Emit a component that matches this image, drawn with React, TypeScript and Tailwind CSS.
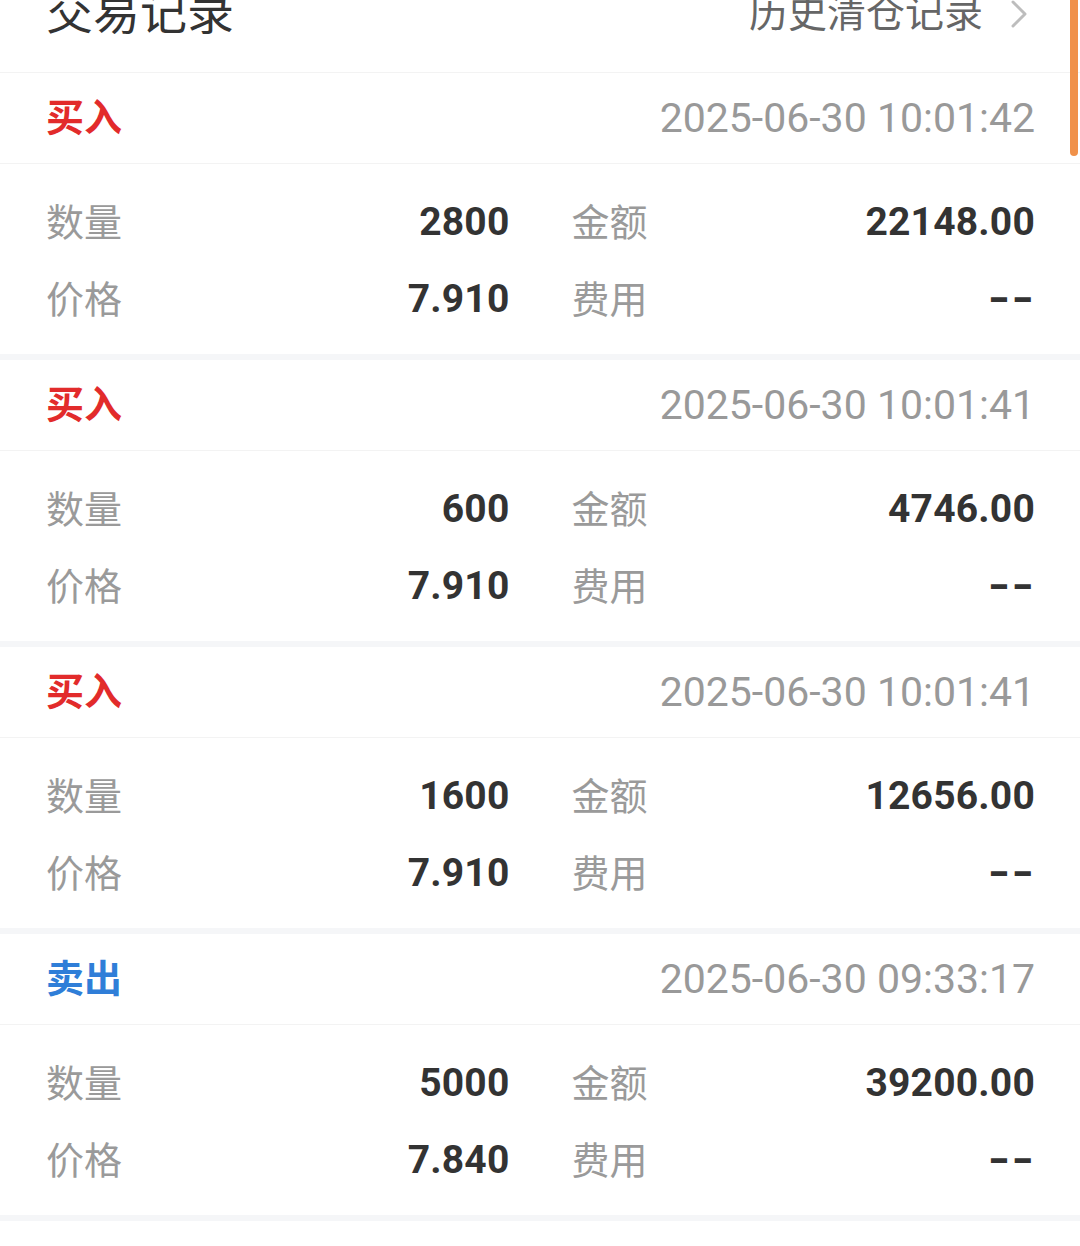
import React from 'react';

type Trade = {
  side: 'buy' | 'sell';
  time: string;
  qty: string;
  amount: string;
  price: string;
  fee: string;
};

const trades: Trade[] = [
  { side: 'buy', time: '2025-06-30 10:01:42', qty: '2800', amount: '22148.00', price: '7.910', fee: '--' },
  { side: 'buy', time: '2025-06-30 10:01:41', qty: '600', amount: '4746.00', price: '7.910', fee: '--' },
  { side: 'buy', time: '2025-06-30 10:01:41', qty: '1600', amount: '12656.00', price: '7.910', fee: '--' },
  { side: 'sell', time: '2025-06-30 09:33:17', qty: '5000', amount: '39200.00', price: '7.840', fee: '--' },
];

const cjk = "font-['Roboto','Noto_Sans_CJK_SC',sans-serif]";

const Cell: React.FC<{ label: string; value: string }> = ({ label, value }) => (
  <div className="flex items-center justify-between">
    <span className="text-[38px] leading-none text-[#9a9a9a]">{label}</span>
    {value === '--' ? (
      <span className="inline-block origin-right scale-x-[1.45] text-[39px] leading-none font-extrabold text-[#333333]">{value}</span>
    ) : (
      <span className="text-[39px] leading-none font-bold text-[#333333] tracking-[0.2px]">{value}</span>
    )}
  </div>
);

const TradeCard: React.FC<{ trade: Trade }> = ({ trade }) => (
  <div className="bg-white">
    <div className="h-[91px] flex items-center justify-between pl-[46px] pr-[45px] border-b border-[#f3f3f3]">
      <span
        className={`text-[38px] leading-none font-bold ${
          trade.side === 'buy' ? 'text-[#e22b2b]' : 'text-[#2f7ed8]'
        }`}
      >
        {trade.side === 'buy' ? '买入' : '卖出'}
      </span>
      <span className="text-[41px] leading-none text-[#999999]">{trade.time}</span>
    </div>
    <div className="h-[190px] pt-[20px] pl-[46px] pr-[45px] grid grid-cols-2 gap-x-[62px] auto-rows-[77px]">
      <Cell label="数量" value={trade.qty} />
      <Cell label="金额" value={trade.amount} />
      <Cell label="价格" value={trade.price} />
      <Cell label="费用" value={trade.fee} />
    </div>
  </div>
);

export default function App() {
  return (
    <div className={`relative w-[1080px] h-[1246px] overflow-hidden bg-white ${cjk}`}>
      {/* Header (scrolled partially out of view) */}
      <div className="h-[73px] border-b border-[#f3f3f3] flex items-start justify-between pl-[46px] pr-[52px] overflow-hidden">
        <span className="-mt-[11px] text-[47px] leading-none text-[#333333]">交易记录</span>
        <div className="-mt-[5px] flex items-center gap-[27px]">
          <span className="text-[39px] leading-none text-[#666666]">历史清仓记录</span>
          <svg width="18" height="30" viewBox="0 0 18 30" className="-mt-[2px]">
            <polyline points="3,3 15,15 3,27" fill="none" stroke="#bdbdbd" strokeWidth="3" strokeLinecap="round" strokeLinejoin="round" />
          </svg>
        </div>
      </div>

      {/* Trade list */}
      <div className="flex flex-col bg-[#f5f6f8] gap-[6px] pb-[6px]">
        {trades.map((t, i) => (
          <TradeCard key={i} trade={t} />
        ))}
      </div>

      {/* Scroll indicator */}
      <div className="absolute right-[2px] top-0 w-[8px] h-[156px] rounded-b-full bg-[#f0914a]" />
    </div>
  );
}
